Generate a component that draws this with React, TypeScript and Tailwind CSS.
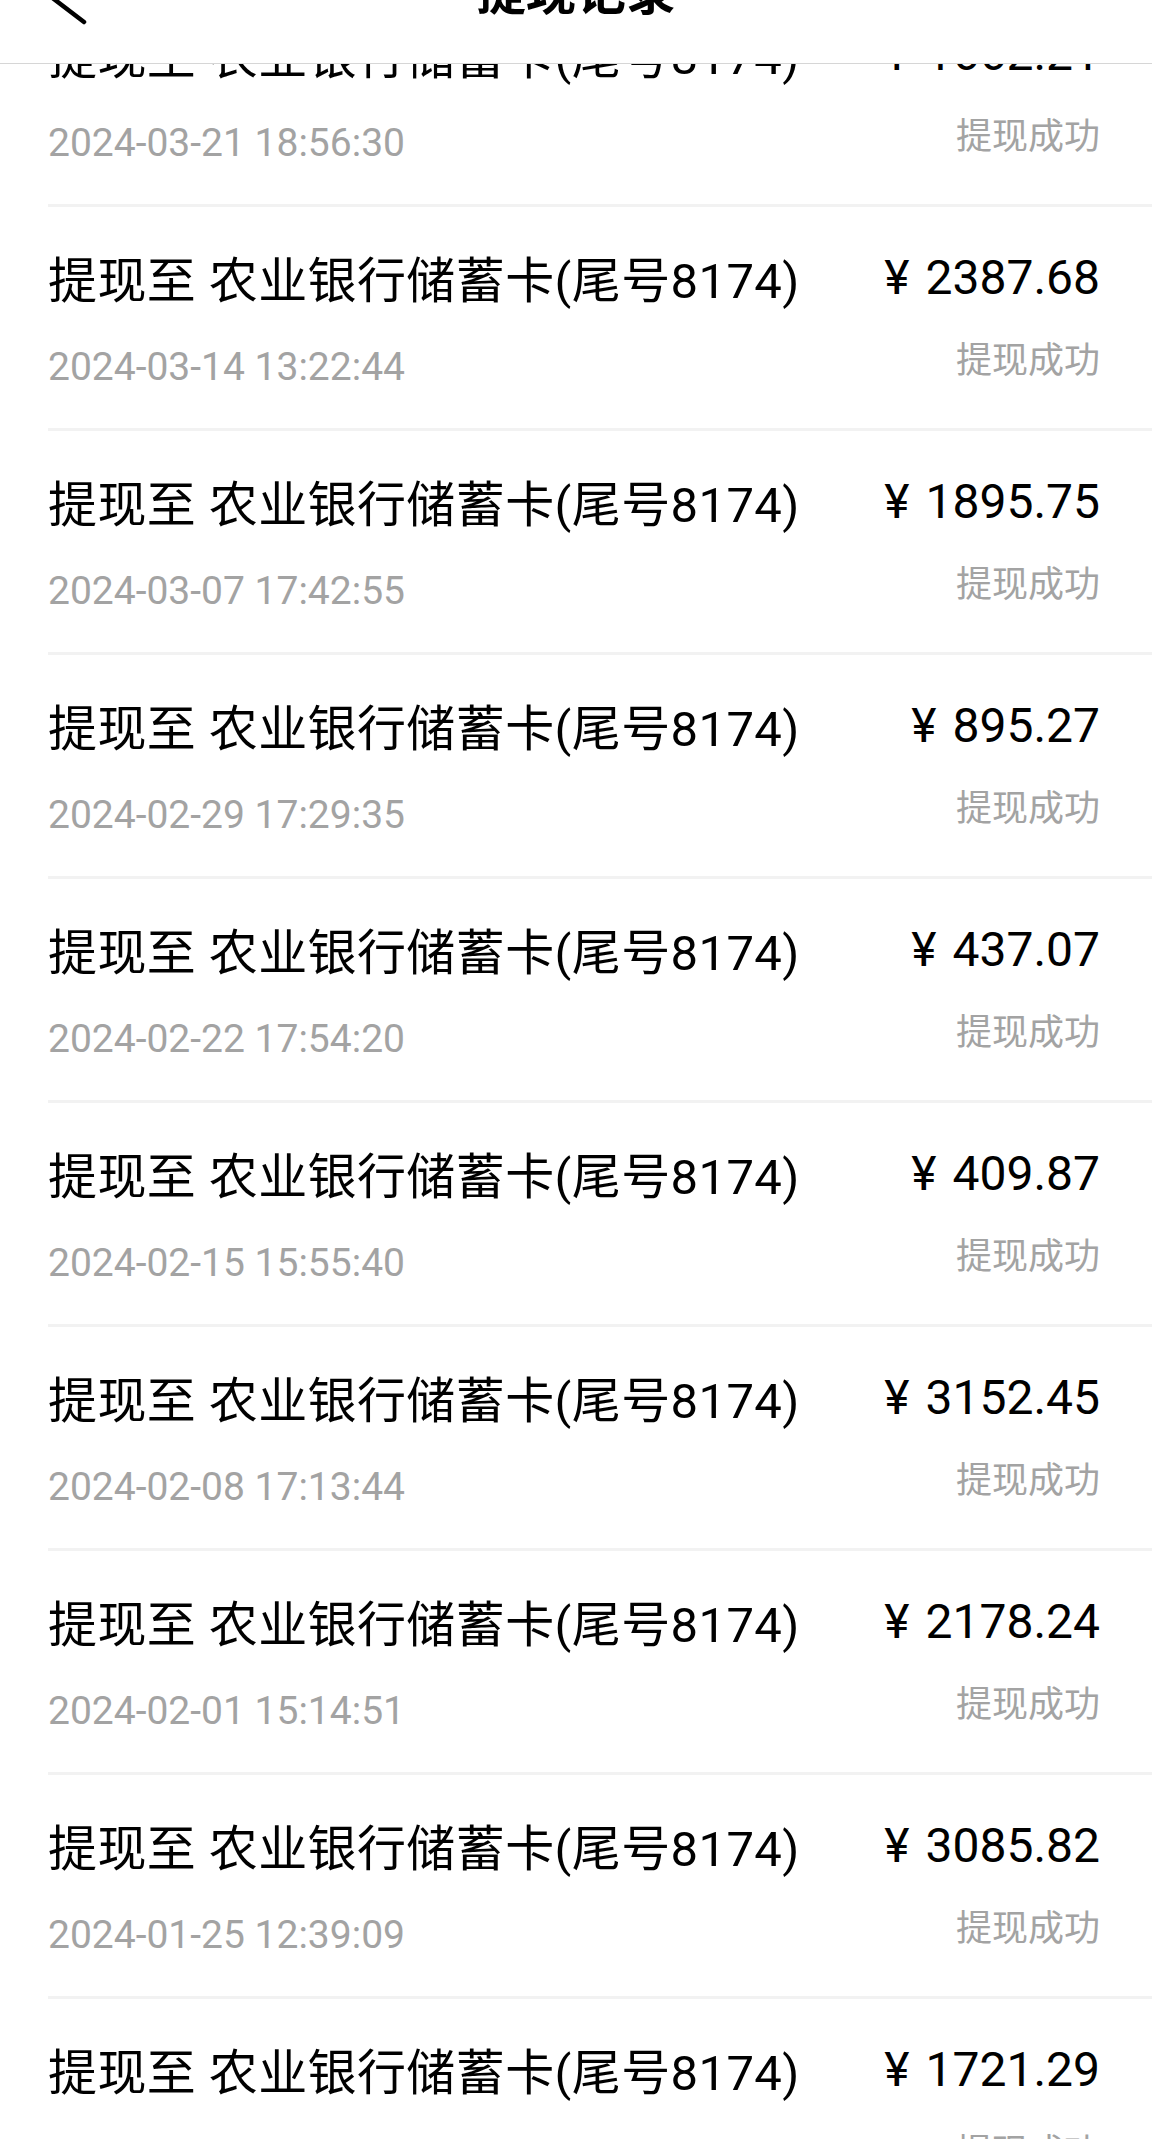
import React from "react";

const rows = [
  { amount: "1662.21", date: "2024-03-21 18:56:30" },
  { amount: "2387.68", date: "2024-03-14 13:22:44" },
  { amount: "1895.75", date: "2024-03-07 17:42:55" },
  { amount: "895.27", date: "2024-02-29 17:29:35" },
  { amount: "437.07", date: "2024-02-22 17:54:20" },
  { amount: "409.87", date: "2024-02-15 15:55:40" },
  { amount: "3152.45", date: "2024-02-08 17:13:44" },
  { amount: "2178.24", date: "2024-02-01 15:14:51" },
  { amount: "3085.82", date: "2024-01-25 12:39:09" },
  { amount: "1721.29", date: "2024-01-18 16:20:33" },
];

const font = { fontFamily: "Roboto, 'Noto Sans CJK SC', sans-serif" };

export default function App() {
  return (
    <div className="relative w-full h-[2139px] overflow-hidden bg-white" style={font}>
      <div className="absolute top-0 left-0 right-0 z-10 h-[64px] bg-white border-b border-[#d6d6d6]">
        <svg className="absolute left-0 top-0 overflow-visible" width="100" height="63" viewBox="0 0 100 63">
          <path d="M86 -36 L46 -7 L84 22" fill="none" stroke="#000" strokeWidth="4.5" strokeLinecap="round" strokeLinejoin="round" />
        </svg>
        <div className="flex justify-center">
          <span className="-mt-[32px] text-[50px] leading-[50px] font-bold text-black">提现记录</span>
        </div>
      </div>
      <div className="-mt-[17px] pl-[48px]">
        {rows.map((r, i) => (
          <div key={i} className="flex justify-between h-[224px] pr-[52px] border-b-[3px] border-[#f2f2f2]">
            <div className="flex flex-col">
              <div className="pt-[50px] text-[49px] leading-[49px] tracking-[0.4px] text-black whitespace-nowrap">
                提现至 农业银行储蓄卡(尾号8174)
              </div>
              <div className="mt-[42px] text-[39px] leading-[39px] text-[#a3a3a3] whitespace-nowrap">
                {r.date}
              </div>
            </div>
            <div className="flex flex-col items-end">
              <div className="pt-[47px] text-[48px] leading-[48px] text-black whitespace-nowrap">
                ¥<span className="ml-[16px]">{r.amount}</span>
              </div>
              <div className="mt-[41px] text-[36px] leading-[36px] text-[#a3a3a3] whitespace-nowrap">
                提现成功
              </div>
            </div>
          </div>
        ))}
      </div>
    </div>
  );
}
